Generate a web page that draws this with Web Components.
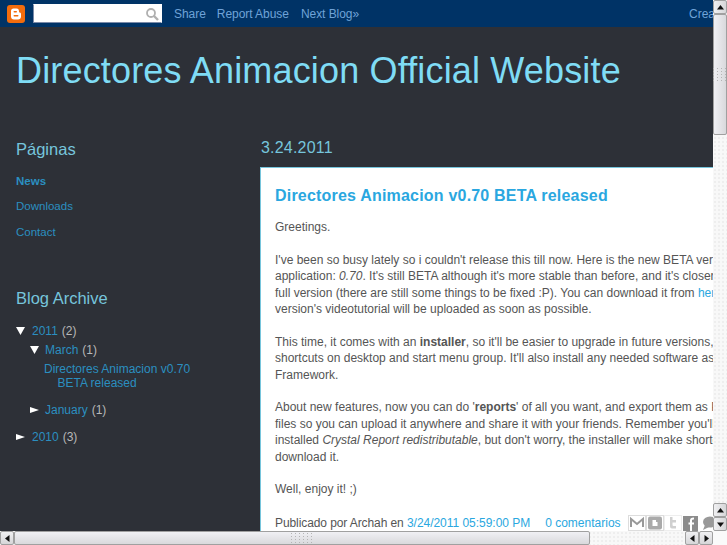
<!DOCTYPE html>
<html>
<head>
<meta charset="utf-8">
<style>
  html, body { margin: 0; height: 100%; overflow: hidden; }
  body { font: 12px/16.5px "Liberation Sans", Arial, sans-serif; }
</style>
</head>
<body>
<blog-window>
  <blog-navbar></blog-navbar>
  <blog-header>Directores Animacion Official Website</blog-header>
  <div class="columns" style="display:flex">
    <blog-sidebar></blog-sidebar>
    <blog-main></blog-main>
  </div>
</blog-window>

<script>
class BlogWindow extends HTMLElement {
  connectedCallback() {
    this.attachShadow({mode: "open"});
    this.shadowRoot.innerHTML = `
      <style>
        :host {
          display: grid;
          grid-template-columns: 713px 14px;
          grid-template-rows: 531px 14px;
          width: 727px;
          height: 545px;
          background: #fafafa;
        }
        .view {
          overflow: hidden;
          background: #2d3037;
        }
      </style>
      <div class="view"><slot></slot></div>
      <app-scrollbar data-dir="v"></app-scrollbar>
      <app-scrollbar data-dir="h"></app-scrollbar>
    `;
  }
}

class AppScrollbar extends HTMLElement {
  connectedCallback() {
    this.attachShadow({mode: "open"});
    const v = this.getAttribute("data-dir") === "v";
    const arrow = (d) => `<svg width="7" height="7" viewBox="0 0 7 7"><path d="${d}" fill="#111"/></svg>`;
    const up = arrow("M3.5 1L7 5.5H0z");
    const down = arrow("M0 1.5H7L3.5 6z");
    const left = arrow("M1 3.5L5.5 0V7z");
    const right = arrow("M6 3.5L1.5 0V7z");
    const grip = Array(v ? 20 : 24).fill("<i></i>").join("");
    this.shadowRoot.innerHTML = `
      <style>
        :host {
          display: flex;
          flex-direction: ${v ? "column" : "row"};
          width: ${v ? "14px" : "713px"};
          height: ${v ? "531px" : "14px"};
          box-sizing: border-box;
          background: #f8f8f8;
          background-image: radial-gradient(#e2e2e2 0.6px, transparent 0.8px);
          background-size: 4px 4px;
        }
        .btn, .thumb {
          flex: none;
          box-sizing: border-box;
          display: flex;
          align-items: center;
          justify-content: center;
          border: 1px solid #a0a0a0;
          border-radius: 2px;
          background: linear-gradient(${v ? "90deg" : "180deg"}, #f0f0f2, #d6d6d8);
        }
        .btn { width: 14px; height: 14px; }
        .thumb {
          ${v ? "height: 121px; width: 14px;" : "width: 576px; height: 14px;"}
          background: linear-gradient(${v ? "90deg" : "180deg"}, #f0f0f4, #d9d9dc);
        }
        .grip {
          display: grid;
          grid-template-columns: repeat(${v ? 4 : 6}, 2px);
          gap: 2px 2px;
        }
        .grip i { width: 1px; height: 1px; background: #b4b4b4; }
        .fill { flex: 1; }
      </style>
      <div class="btn">${v ? up : left}</div>
      <div class="thumb"><div class="grip">${grip}</div></div>
      <div class="fill"></div>
      <div class="btn">${v ? up : left}</div>
      <div class="btn">${v ? down : right}</div>
    `;
  }
}

class BlogNavbar extends HTMLElement {
  connectedCallback() {
    this.attachShadow({mode: "open"});
    this.shadowRoot.innerHTML = `
      <style>
        :host {
          display: flex;
          align-items: center;
          height: 27px;
          padding-left: 7px;
          background: #003366;
          white-space: nowrap;
          overflow: hidden;
          font: 12px "Liberation Sans", Arial, sans-serif;
          color: #6fa3d8;
        }
        .logo { flex: none; width: 18px; height: 18px; display: block; }
        .search {
          flex: none;
          box-sizing: border-box;
          display: flex;
          align-items: center;
          justify-content: flex-end;
          width: 129px;
          height: 19px;
          margin-left: 8px;
          padding-right: 2px;
          background: #fff;
          border: 1px solid #fff;
          border-left-color: #7a8aa8;
          border-bottom-color: #7a8aa8;
        }
        a { color: inherit; text-decoration: none; }
        .links { display: flex; gap: 12px; margin-left: 12px; letter-spacing: -0.05px; }
        .share { margin-right: -1px; }
        .create { margin-left: 318px; }
      </style>
      <svg class="logo" viewBox="0 0 18 18">
        <rect width="18" height="18" rx="3" fill="#f26c0d"/>
        <path d="M6.5 3.5H9.5C11.3 3.5 12 4.8 12 6.3V7.3C13.2 7.3 14 8 14 9V11.5C14 13.4 12.7 14.5 11 14.5H7C5.2 14.5 4 13.3 4 11.5V6C4 4.5 5 3.5 6.5 3.5Z" fill="#fff"/>
        <rect x="6.5" y="6" width="3.5" height="1.6" rx=".8" fill="#f26c0d"/>
        <rect x="6.5" y="10" width="5" height="1.6" rx=".8" fill="#f26c0d"/>
      </svg>
      <div class="search">
        <svg width="14" height="14" viewBox="0 0 14 14" fill="none" stroke="#b0b0b0">
          <circle cx="6" cy="6" r="4" stroke-width="1.8"/>
          <path d="M9 9l4 4" stroke-width="2.4"/>
        </svg>
      </div>
      <div class="links">
        <a href="#" class="share">Share</a>
        <a href="#">Report Abuse</a>
        <a href="#">Next Blog»</a>
        <a href="#" class="create">Create Blog</a>
      </div>
    `;
  }
}

class BlogHeader extends HTMLElement {
  connectedCallback() {
    this.attachShadow({mode: "open"});
    this.shadowRoot.innerHTML = `
      <style>
        :host {
          display: block;
          padding: 22px 0 0 16px;
          height: 90px;
          box-sizing: border-box;
          font: 36px/44px "Liberation Sans", Arial, sans-serif;
          letter-spacing: 0.16px;
          color: #7fdcf5;
          white-space: nowrap;
        }
      </style>
      <slot></slot>
    `;
  }
}

class BlogSidebar extends HTMLElement {
  connectedCallback() {
    this.attachShadow({mode: "open"});
    this.shadowRoot.innerHTML = `
      <style>
        :host {
          display: block;
          flex: none;
          width: 260px;
          box-sizing: border-box;
          padding: 22px 0 0 16px;
          font: 12px/16.5px "Liberation Sans", Arial, sans-serif;
          color: #b8b8b8;
        }
        h2 {
          margin: 0;
          font-size: 16.5px;
          line-height: 20px;
          font-weight: normal;
          color: #76c5dc;
        }
        a { color: #2b8fc0; text-decoration: none; }
        .pages { margin-top: 14px; display: flex; flex-direction: column; gap: 8.8px; font-size: 11.5px; }
        .pages b { color: #2b8fc0; }
        .archive { margin-top: 48px; }
        .tree { margin-top: 15px; }
        .row { display: flex; align-items: center; height: 16.5px; }
        .row svg { flex: none; width: 11px; height: 10px; margin: 0 6px 0 -1px; }
        .row a { margin-right: 4px; }
        .one { margin-bottom: 10.5px; }
        .sub { margin: 0 0 0 14px; }
        .sub .row svg { margin-right: 5px; }
        .post { margin: 3px 0 12px 14px; padding-left: 13.5px; text-indent: -13.5px; width: 150px; line-height: 14px; }
      </style>
      <h2>Páginas</h2>
      <div class="pages">
        <a href="#"><b>News</b></a>
        <a href="#">Downloads</a>
        <a href="#">Contact</a>
      </div>
      <div class="archive">
        <h2>Blog Archive</h2>
        <div class="tree">
          <div class="row" style="margin-bottom:2.5px"><svg viewBox="0 0 11 10"><path d="M1 1H10L5.5 9z" fill="#fff"/></svg><a href="#">2011</a> (2)</div>
          <div class="sub">
            <div class="row"><svg viewBox="0 0 11 10"><path d="M1 1H10L5.5 9z" fill="#fff"/></svg><a href="#">March</a> (1)</div>
            <div class="post"><a href="#">Directores Animacion v0.70 BETA released</a></div>
            <div class="row one"><svg viewBox="0 0 11 10"><path d="M1 2L10 5L1 8z" fill="#fff"/></svg><a href="#">January</a> (1)</div>
          </div>
          <div class="row"><svg viewBox="0 0 11 10"><path d="M1 2L10 5L1 8z" fill="#fff"/></svg><a href="#">2010</a> (3)</div>
        </div>
      </div>
    `;
  }
}

class BlogMain extends HTMLElement {
  connectedCallback() {
    this.attachShadow({mode: "open"});
    this.shadowRoot.innerHTML = `
      <style>
        :host {
          display: block;
          flex: none;
          width: 453px;
          font: 12px/16.4px "Liberation Sans", Arial, sans-serif;
        }
        .date {
          margin: 21px 0 0 1px;
          height: 29px;
          font-size: 16px;
          line-height: 20px;
          letter-spacing: 0.2px;
          color: #76c5dc;
        }
      </style>
      <div class="date">3.24.2011</div>
      <blog-post></blog-post>
    `;
  }
}

class BlogPost extends HTMLElement {
  connectedCallback() {
    this.attachShadow({mode: "open"});
    this.shadowRoot.innerHTML = `
      <style>
        :host {
          display: block;
          height: 500px;
          box-sizing: border-box;
          padding: 18px 0 0 14px;
          background: #fff;
          border-top: 1px solid #76c5dc;
          border-left: 1px solid #76c5dc;
          color: #555;
          overflow: hidden;
          white-space: nowrap;
        }
        h3 {
          margin: 0 0 13px;
          font-size: 16px;
          line-height: 20px;
          letter-spacing: 0.2px;
          color: #2aa7e0;
        }
        p { margin: 0 0 16.4px; }
        a { color: #2aa7e0; text-decoration: none; }
        .foot { display: flex; align-items: center; margin-top: 17px; height: 16px; }
        .by { letter-spacing: -0.09px; }
        .date-link { letter-spacing: -0.03px; }
        .count { margin-left: 15px; }
        share-icons { margin-left: 7px; }
      </style>
      <h3>Directores Animacion v0.70 BETA released</h3>
      <p>Greetings.</p>
      <p>I've been so busy lately so i couldn't release this till now. Here is the new BETA version of the<br>
      application: <i>0.70</i>. It's still BETA although it's more stable than before, and it's closer to the<br>
      full version (there are still some things to be fixed :P). You can download it from <a href="#">here</a>. The<br>
      version's videotutorial will be uploaded as soon as possible.</p>
      <p>This time, it comes with an <b>installer</b>, so it'll be easier to upgrade in future versions, and creates<br>
      shortcuts on desktop and start menu group. It'll also install any needed software as .NET<br>
      Framework.</p>
      <p>About new features, now you can do '<b>reports</b>' of all you want, and export them as PDF or other<br>
      files so you can upload it anywhere and share it with your friends. Remember you'll need to have<br>
      installed <i>Crystal Report redistributable</i>, but don't worry, the installer will make shortcuts to<br>
      download it.</p>
      <p>Well, enjoy it! ;)</p>
      <div class="foot">
        <span class="by">Publicado por Archah en <a class="date-link" href="#">3/24/2011 05:59:00 PM</a></span>
        <a class="count" href="#">0 comentarios</a>
        <share-icons></share-icons>
      </div>
    `;
  }
}

class ShareIcons extends HTMLElement {
  connectedCallback() {
    this.attachShadow({mode: "open"});
    this.shadowRoot.innerHTML = `
      <style>
        :host { display: flex; flex: none; }
        svg { display: block; width: 18px; height: 16px; flex: none; }
      </style>
      <svg viewBox="0 0 18 16"><rect x=".5" y=".5" width="17" height="15" fill="#fff" stroke="#ddd"/><path d="M3 12V4L9 9L15 4V12" fill="none" stroke="#999" stroke-width="2"/></svg>
      <svg viewBox="0 0 18 16"><rect x=".5" y=".5" width="17" height="15" fill="#fff" stroke="#ddd"/><rect x="2" y="1.500" width="14" height="13" rx="2" fill="#aaa"/><path d="M6.500 5h3.500v2h1.500v4H6.500z" fill="#fff"/></svg>
      <svg viewBox="0 0 18 16"><rect x=".5" y=".5" width="17" height="15" fill="#fff" stroke="#eee"/><path d="M6 2h2.500v3H12V7.500H8.500V10c0 1 1 1.300 3.500 1v2.500H8C6.500 13.500 6 12.500 6 11z" fill="#d0d0d0"/></svg>
      <svg viewBox="0 0 18 16"><rect x="1" y="1" width="15" height="15" fill="#8c8c8c"/><path d="M10 16V9.500H12V7.500H10V5.500C10 4.800 10.500 4.500 12 4.500V2.500C9 2.500 8 3.500 8 5.500V7.500H6.500V9.500H8V16z" fill="#fff"/></svg>
      <svg viewBox="0 0 18 16"><ellipse cx="10" cy="7" rx="7" ry="5.500" fill="#999"/><path d="M5 10L3 15L9 12z" fill="#999"/></svg>
    `;
  }
}

customElements.define("blog-window", BlogWindow);
customElements.define("app-scrollbar", AppScrollbar);
customElements.define("blog-navbar", BlogNavbar);
customElements.define("blog-header", BlogHeader);
customElements.define("blog-sidebar", BlogSidebar);
customElements.define("blog-main", BlogMain);
customElements.define("blog-post", BlogPost);
customElements.define("share-icons", ShareIcons);
</script>
</body>
</html>
